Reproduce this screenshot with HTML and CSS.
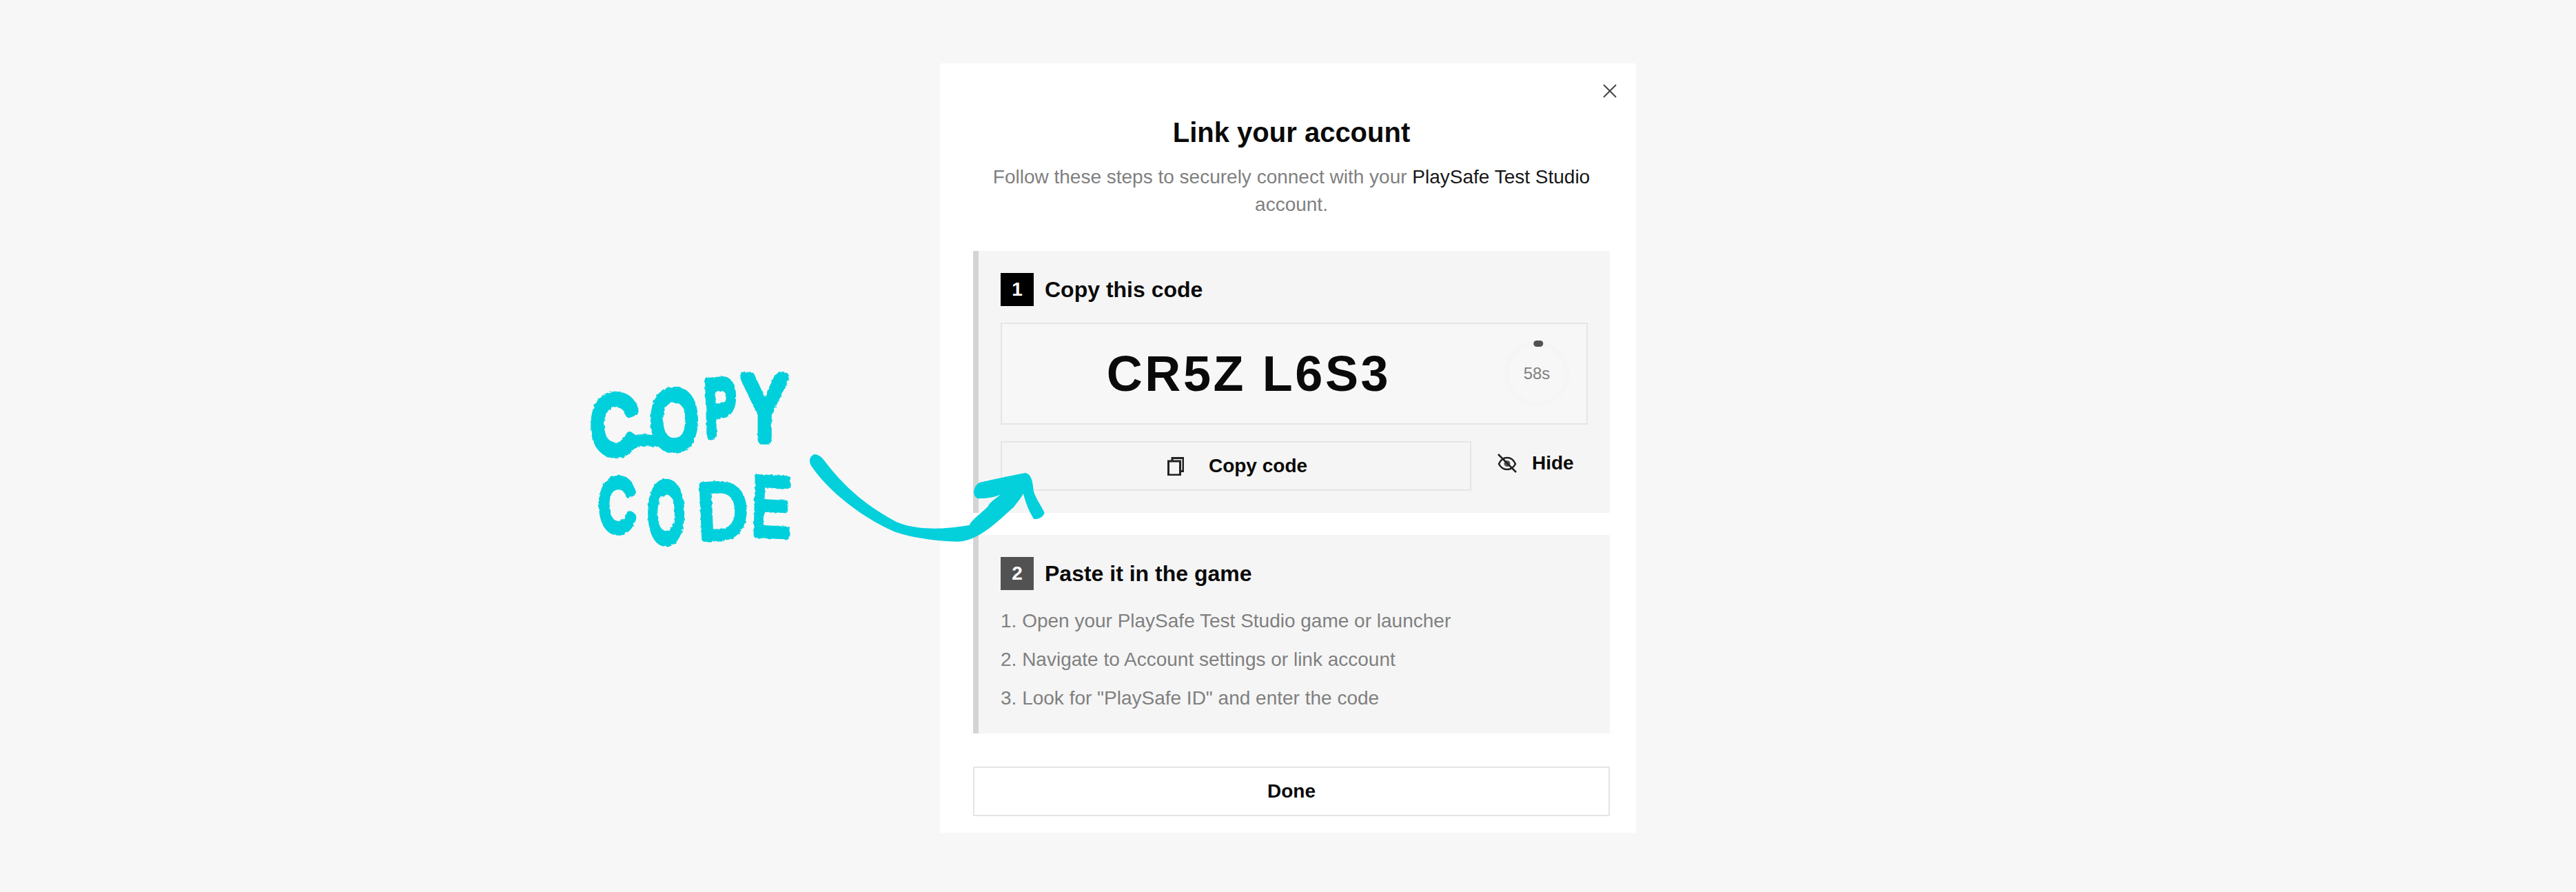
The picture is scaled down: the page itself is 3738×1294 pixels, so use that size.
FILE: index.html
```html
<!DOCTYPE html>
<html lang="en">
<head>
<meta charset="utf-8">
<title>Link your account</title>
<link rel="stylesheet" href="styles.css">
</head>
<body>
<main class="modal">
  <button class="close" aria-label="Close">
    <svg viewBox="0 0 20 20" class="close-icon"><path d="M1 1L19 19M19 1L1 19"/></svg>
  </button>
  <header class="head">
    <h1 class="title">Link your account</h1>
    <p class="sub">Follow these steps to securely connect with your <span class="strong">PlaySafe Test Studio</span> account.</p>
  </header>
  <section class="step">
    <div class="step-head"><span class="num num-black">1</span><h2 class="step-title">Copy this code</h2></div>
    <div class="code-box">
      <div class="code">CR5Z L6S3</div>
      <div class="timer">
        <svg class="ring" viewBox="0 0 100 100"><circle cx="50" cy="50" r="44"/><path d="M49.800 6.500H54.800" class="ring-dot"/></svg>
        <span class="secs">58s</span>
      </div>
    </div>
    <div class="actions">
      <button class="copy">
        <svg class="icon-copy" viewBox="0 0 24 27"><path d="M7 5V1.500H23V20.500H19"/><rect x="1.500" y="6" width="17" height="20"/></svg>
        <span>Copy code</span>
      </button>
      <button class="hide">
        <svg class="icon-eye" viewBox="0 0 28 28"><path d="M2 15C5 8 9 6 14 6S23 8 26 15C23 21 19 23 14 23S5 21 2 15Z"/><circle cx="14" cy="14.500" r="4.500" class="iris"/><path d="M1 1L27 27"/></svg>
        <span>Hide</span>
      </button>
    </div>
  </section>
  <section class="step step-two">
    <div class="step-head"><span class="num num-gray">2</span><h2 class="step-title">Paste it in the game</h2></div>
    <ol class="list">
      <li>1. Open your PlaySafe Test Studio game or launcher</li>
      <li>2. Navigate to Account settings or link account</li>
      <li>3. Look for "PlaySafe ID" and enter the code</li>
    </ol>
  </section>
  <button class="done">Done</button>
</main>
<svg class="annot" viewBox="0 0 3738 1294" width="3738" height="1294">
  <defs>
    <filter id="rough" x="-5%" y="-5%" width="110%" height="110%">
      <feTurbulence type="fractalNoise" baseFrequency="0.18" numOctaves="2" seed="4" result="noise"/>
      <feDisplacementMap in="SourceGraphic" in2="noise" scale="4"/>
    </filter>
  </defs>
  <g class="hand">
    <text transform="translate(857 655) scale(.92 1.17) rotate(2)">C</text>
    <path class="tail" d="M915 644Q932 636 950 640"/>
    <text transform="translate(945 650) scale(.86 1.16)">O</text>
    <text transform="translate(1024 632) scale(.68 1.12) rotate(-3)">P</text>
    <text transform="translate(1078 637) scale(.95 1.3)">Y</text>
    <text transform="translate(870 770) scale(.72 1.05) rotate(-1)">C</text>
    <text transform="translate(941 785) scale(.66 1.18)">O</text>
    <text class="thin" transform="translate(1014 782) scale(1 1.13) rotate(-3)">D</text>
    <text class="thin" transform="translate(1090 775) scale(.85 1.2) rotate(2)">E</text>
  </g>
  <path class="arrow" transform="translate(1150 640) scale(.33333)" d="M95 57C112 58 125 68 135 80C200 165 290 265 450 350C520 380 620 392 770 365C782 340 820 315 850 285C862 262 880 255 905 232C888 240 870 248 810 250C795 248 788 232 790 215C794 196 803 186 815 180C860 170 900 160 1015 138C1035 145 1045 160 1050 220C1062 255 1085 285 1097 312C1090 332 1070 342 1050 338C1030 305 1015 270 1005 228C990 255 975 270 965 285C925 320 860 385 800 415C770 430 745 437 720 437C610 435 500 415 440 392C340 350 170 240 80 105C70 85 75 65 95 57Z"/>
</svg>
</body>
</html>
```
FILE: styles.css
```css
* { box-sizing: border-box; }
html, body { margin: 0; height: 100%; }
body {
  background: #f7f7f7;
  font-family: "Liberation Sans", Arial, sans-serif;
  display: flex;
  justify-content: center;
  align-items: flex-start;
  padding-top: 92px;
  overflow: hidden;
  color: #0a0a0a;
}
button { font: inherit; color: inherit; background: none; border: 0; padding: 0; }
.modal {
  position: relative;
  width: 1010px;
  height: 1116px;
  background: #fff;
  padding: 76px 38px 24px 48px;
}
.close { position: absolute; top: 30px; right: 28px; width: 20px; height: 20px; display: flex; }
.close-icon { width: 20px; height: 20px; fill: none; stroke: #444; stroke-width: 2; }
.head { text-align: center; margin-bottom: 47px; }
.title { margin: 0; font-size: 40px; line-height: 48px; font-weight: 700; }
.sub { margin: 21px 0 0; font-size: 28px; line-height: 40px; color: #808080; }
.strong { color: #171717; }
.step {
  background: #f5f5f5;
  border-left: 8px solid #d4d4d4;
  padding: 32px;
}
.step-two { margin-top: 32px; padding-bottom: 30px; }
.step-head { display: flex; align-items: center; gap: 16px; }
.num {
  width: 48px; height: 48px;
  display: flex; align-items: center; justify-content: center;
  color: #fff;
  font-weight: 700;
  font-size: 28px;
}
.num-black { background: #000; }
.num-gray { background: #525252; }
.step-title { margin: 0; font-size: 32px; line-height: 48px; font-weight: 700; }
.code-box {
  margin-top: 24px;
  height: 148px;
  border: 2px solid #e5e5e5;
  background: #f7f7f7;
  display: flex;
  align-items: center;
}
.code {
  flex: 1;
  text-align: center;
  font-size: 72px;
  font-weight: 700;
  letter-spacing: 3.600px;
  line-height: 80px;
}
.timer {
  position: relative;
  width: 132px;
  height: 100px;
  display: flex;
  align-items: center;
  justify-content: center;
}
.ring { position: absolute; left: 10px; top: 0; width: 100px; height: 100px; fill: none; stroke: #f5f5f5; stroke-width: 7; }
.ring-dot { stroke: #525252; stroke-width: 9; stroke-linecap: round; }
.secs { font-size: 24px; color: #808080; margin-left: -12px; }
.actions { margin-top: 24px; display: flex; gap: 38px; align-items: flex-start; }
.copy {
  width: 683px;
  height: 72px;
  border: 2px solid #e5e5e5;
  padding-left: 4px;
  font-size: 28px;
  font-weight: 700;
  display: flex;
  align-items: center;
  justify-content: center;
  gap: 36px;
}
.icon-copy { width: 24px; height: 27px; fill: none; stroke: #222; stroke-width: 3; }
.hide {
  height: 64px;
  font-size: 28px;
  font-weight: 700;
  display: flex;
  align-items: center;
  gap: 22px;
}
.icon-eye { width: 28px; height: 28px; fill: none; stroke: #222; stroke-width: 2.500; }
.iris { fill: #555; stroke: none; }
.list { list-style: none; margin: 24px 0 0; padding: 0; display: flex; flex-direction: column; gap: 14px; font-size: 28px; line-height: 42px; color: #808080; }
.done {
  display: block;
  width: 100%;
  height: 72px;
  margin-top: 48px;
  border: 2px solid #e5e5e5;
  background: #fff;
  font-size: 28px;
  font-weight: 700;
}
.annot { position: absolute; left: 0; top: 0; pointer-events: none; }
.hand { filter: url(#rough); }
.hand text {
  font-family: "Liberation Sans", sans-serif;
  font-size: 100px;
  fill: #04d0dc;
  stroke: #04d0dc;
  stroke-width: 12px;
  stroke-linejoin: round;
}
.hand .thin { stroke-width: 8px; }
.tail { fill: none; stroke: #04d0dc; stroke-width: 17px; stroke-linecap: round; }
.arrow { fill: #04d0dc; }
```
